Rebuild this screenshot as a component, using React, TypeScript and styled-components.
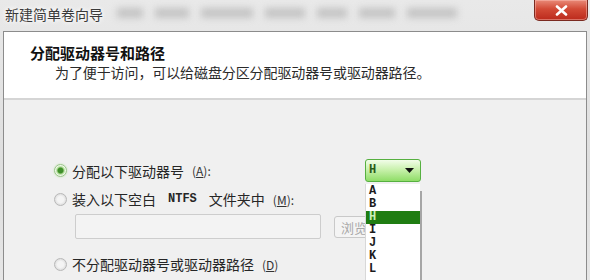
import React from 'react';
import styled, { createGlobalStyle } from 'styled-components';

const GlobalStyle = createGlobalStyle`
  html, body {
    margin: 0;
    padding: 0;
    overflow: hidden;
    background: #e4e4e4;
  }
  body {
    font-family: "Noto Sans CJK SC", "Liberation Sans", sans-serif;
  }
`;

const Window = styled.div`
  width: 590px;
  height: 280px;
  display: flex;
  flex-direction: column;
  background: linear-gradient(180deg, #e9e9e9 0%, #dedede 60%, #e6e6e6 100%);
  overflow: hidden;
`;

const TitleBar = styled.div`
  height: 31px;
  flex-shrink: 0;
  display: flex;
  align-items: flex-start;
`;

const TitleText = styled.div`
  margin: 5px 0 0 5px;
  font-size: 14px;
  line-height: 18px;
  color: #3a3a3a;
  text-shadow: 0 0 4px #ffffff, 0 0 6px #ffffff;
  white-space: nowrap;
`;

const GlassBlobs = styled.div`
  flex: 1;
  display: flex;
  align-items: center;
  gap: 12px;
  padding: 8px 0 0 14px;
  filter: blur(3.5px);
`;

const Blob = styled.span<{ $w: number }>`
  width: ${p => p.$w}px;
  height: 10px;
  background: #c4c4c4;
`;

const CloseButton = styled.div`
  width: 52px;
  height: 20px;
  margin-right: 2px;
  border: 1px solid #7a2a20;
  border-top: none;
  border-radius: 0 0 5px 5px;
  background: linear-gradient(180deg, #e98a78 0%, #d24a36 45%, #bb2a1c 100%);
  box-shadow: inset 0 0 0 1px rgba(255, 200, 190, 0.45);
  display: flex;
  align-items: center;
  justify-content: center;
`;

const Frame = styled.div`
  flex: 1;
  margin: 0 3px 0 3px;
  border: 1px solid #8c8c8c;
  border-bottom: none;
  display: flex;
  flex-direction: column;
  background: #f0f0f0;
`;

const Header = styled.div`
  height: 68px;
  flex-shrink: 0;
  background: #ffffff;
  border-bottom: 2px solid #d5d5d5;
  padding: 12px 0 0 26px;
  box-sizing: border-box;
`;

const HeaderTitle = styled.div`
  font-size: 15px;
  line-height: 18px;
  font-weight: bold;
  color: #111;
`;

const HeaderSub = styled.div`
  padding-left: 25px;
  font-size: 14px;
  line-height: 20px;
  color: #2a2a2a;
  letter-spacing: -0.1px;
`;

const Body = styled.div`
  flex: 1;
  padding: 59px 0 0 50px;
  display: flex;
  flex-direction: column;
`;

const DriveRow = styled.div`
  display: grid;
  grid-template-columns: 311px 56px;
  align-items: center;
  height: 23px;
`;

const Option = styled.label<{ $gap?: number }>`
  display: flex;
  align-items: center;
  gap: 5px;
  height: 20px;
  margin-top: ${p => p.$gap ?? 0}px;
  font-size: 14px;
  color: #262626;
  white-space: nowrap;
`;

const Radio = styled.span<{ $checked?: boolean }>`
  width: 11px;
  height: 11px;
  border-radius: 50%;
  border: 1px solid ${p => (p.$checked ? '#9ac48a' : '#b8b8b8')};
  background: ${p =>
    p.$checked
      ? 'radial-gradient(circle, #3f8f2a 0 2.5px, #a9d88f 3.5px, #eef8e8 5px)'
      : 'radial-gradient(circle, #f4f4f4 0 3px, #dcdcdc 6px)'};
  box-shadow: ${p => (p.$checked ? '0 0 2px #b9e3a3' : 'none')};
  flex-shrink: 0;
`;

const Key = styled.span`
  font-size: 12px;
  margin-left: 3px;
  color: #333;
`;

const Mono = styled.span`
  font-family: "Liberation Mono", monospace;
  font-size: 12px;
  font-weight: bold;
  margin: 0 7px 0 7px;
`;

const PathRow = styled.div`
  display: flex;
  align-items: center;
  gap: 13px;
  margin: 5px 0 0 21px;
`;

const PathInput = styled.div`
  width: 244px;
  height: 23px;
  border: 1px solid #cdcdcd;
  border-radius: 2px;
  background: #f3f3f3;
`;

const BrowseButton = styled.div`
  width: 74px;
  height: 22px;
  border: 1px solid #c9c9c9;
  border-radius: 3px;
  background: #f4f4f4;
  color: #a8a8a8;
  font-size: 13px;
  line-height: 22px;
  padding-left: 6px;
  box-sizing: border-box;
  white-space: nowrap;
`;

const ComboWrap = styled.div`
  position: relative;
  height: 23px;
`;

const Combo = styled.div`
  height: 23px;
  box-sizing: border-box;
  border: 1px solid #56b040;
  border-radius: 3px;
  background: linear-gradient(180deg, #f2fde9 0%, #c9f1ad 45%, #8fdd67 100%);
  display: flex;
  align-items: center;
  justify-content: space-between;
  padding: 0 6px 0 3px;
`;

const Letter = styled.span<{ $color?: string }>`
  display: block;
  font-family: "Liberation Mono", "DejaVu Sans Mono", monospace;
  font-weight: bold;
  font-size: 12px;
  line-height: 13px;
  color: ${p => p.$color ?? '#1b1b1b'};
`;

const DropList = styled.div`
  position: absolute;
  top: 25px;
  left: 0;
  width: 54px;
  height: 95px;
  overflow: hidden;
  padding-top: 1px;
  background: #ffffff;
  border-left: 1px solid #d8d8d8;
  box-shadow: 3px 6px 0 -1px #a6a6a6;
`;

const ListItem = styled.div<{ $selected?: boolean }>`
  height: 13px;
  padding-left: 3px;
  background: ${p => (p.$selected ? '#1f7d12' : 'transparent')};
`;

const drives = ['A', 'B', 'H', 'I', 'J', 'K', 'L'];

export default function App() {
  return (
    <>
      <GlobalStyle />
      <Window>
        <TitleBar>
          <TitleText>新建简单卷向导</TitleText>
          <GlassBlobs>
            <Blob $w={26} />
            <Blob $w={34} />
            <Blob $w={52} />
            <Blob $w={40} />
            <Blob $w={30} />
            <Blob $w={36} />
            <Blob $w={50} />
          </GlassBlobs>
          <CloseButton>
            <svg width="13" height="11" viewBox="0 0 13 11">
              <path d="M2 1.5 L11 9.5 M11 1.5 L2 9.5" stroke="#ffffff" strokeWidth="2.6" strokeLinecap="round" />
            </svg>
          </CloseButton>
        </TitleBar>
        <Frame>
          <Header>
            <HeaderTitle>分配驱动器号和路径</HeaderTitle>
            <HeaderSub>为了便于访问，可以给磁盘分区分配驱动器号或驱动器路径。</HeaderSub>
          </Header>
          <Body>
            <DriveRow>
              <Option>
                <Radio $checked />
                分配以下驱动器号<Key>(<u>A</u>):</Key>
              </Option>
              <ComboWrap>
                <Combo>
                  <Letter $color="#2a5a1a">H</Letter>
                  <svg width="9" height="5" viewBox="0 0 9 5">
                    <path d="M0 0 H9 L4.5 5 Z" fill="#111" />
                  </svg>
                </Combo>
                <DropList>
                  {drives.map(d => (
                    <ListItem key={d} $selected={d === 'H'}>
                      <Letter $color={d === 'H' ? '#c9f0b8' : undefined}>{d}</Letter>
                    </ListItem>
                  ))}
                </DropList>
              </ComboWrap>
            </DriveRow>
            <Option $gap={7}>
              <Radio />
              装入以下空白<Mono>NTFS</Mono>文件夹中<Key>(<u>M</u>):</Key>
            </Option>
            <PathRow>
              <PathInput />
              <BrowseButton>浏览(R)...</BrowseButton>
            </PathRow>
            <Option $gap={15}>
              <Radio />
              不分配驱动器号或驱动器路径<Key>(<u>D</u>)</Key>
            </Option>
          </Body>
        </Frame>
      </Window>
    </>
  );
}
